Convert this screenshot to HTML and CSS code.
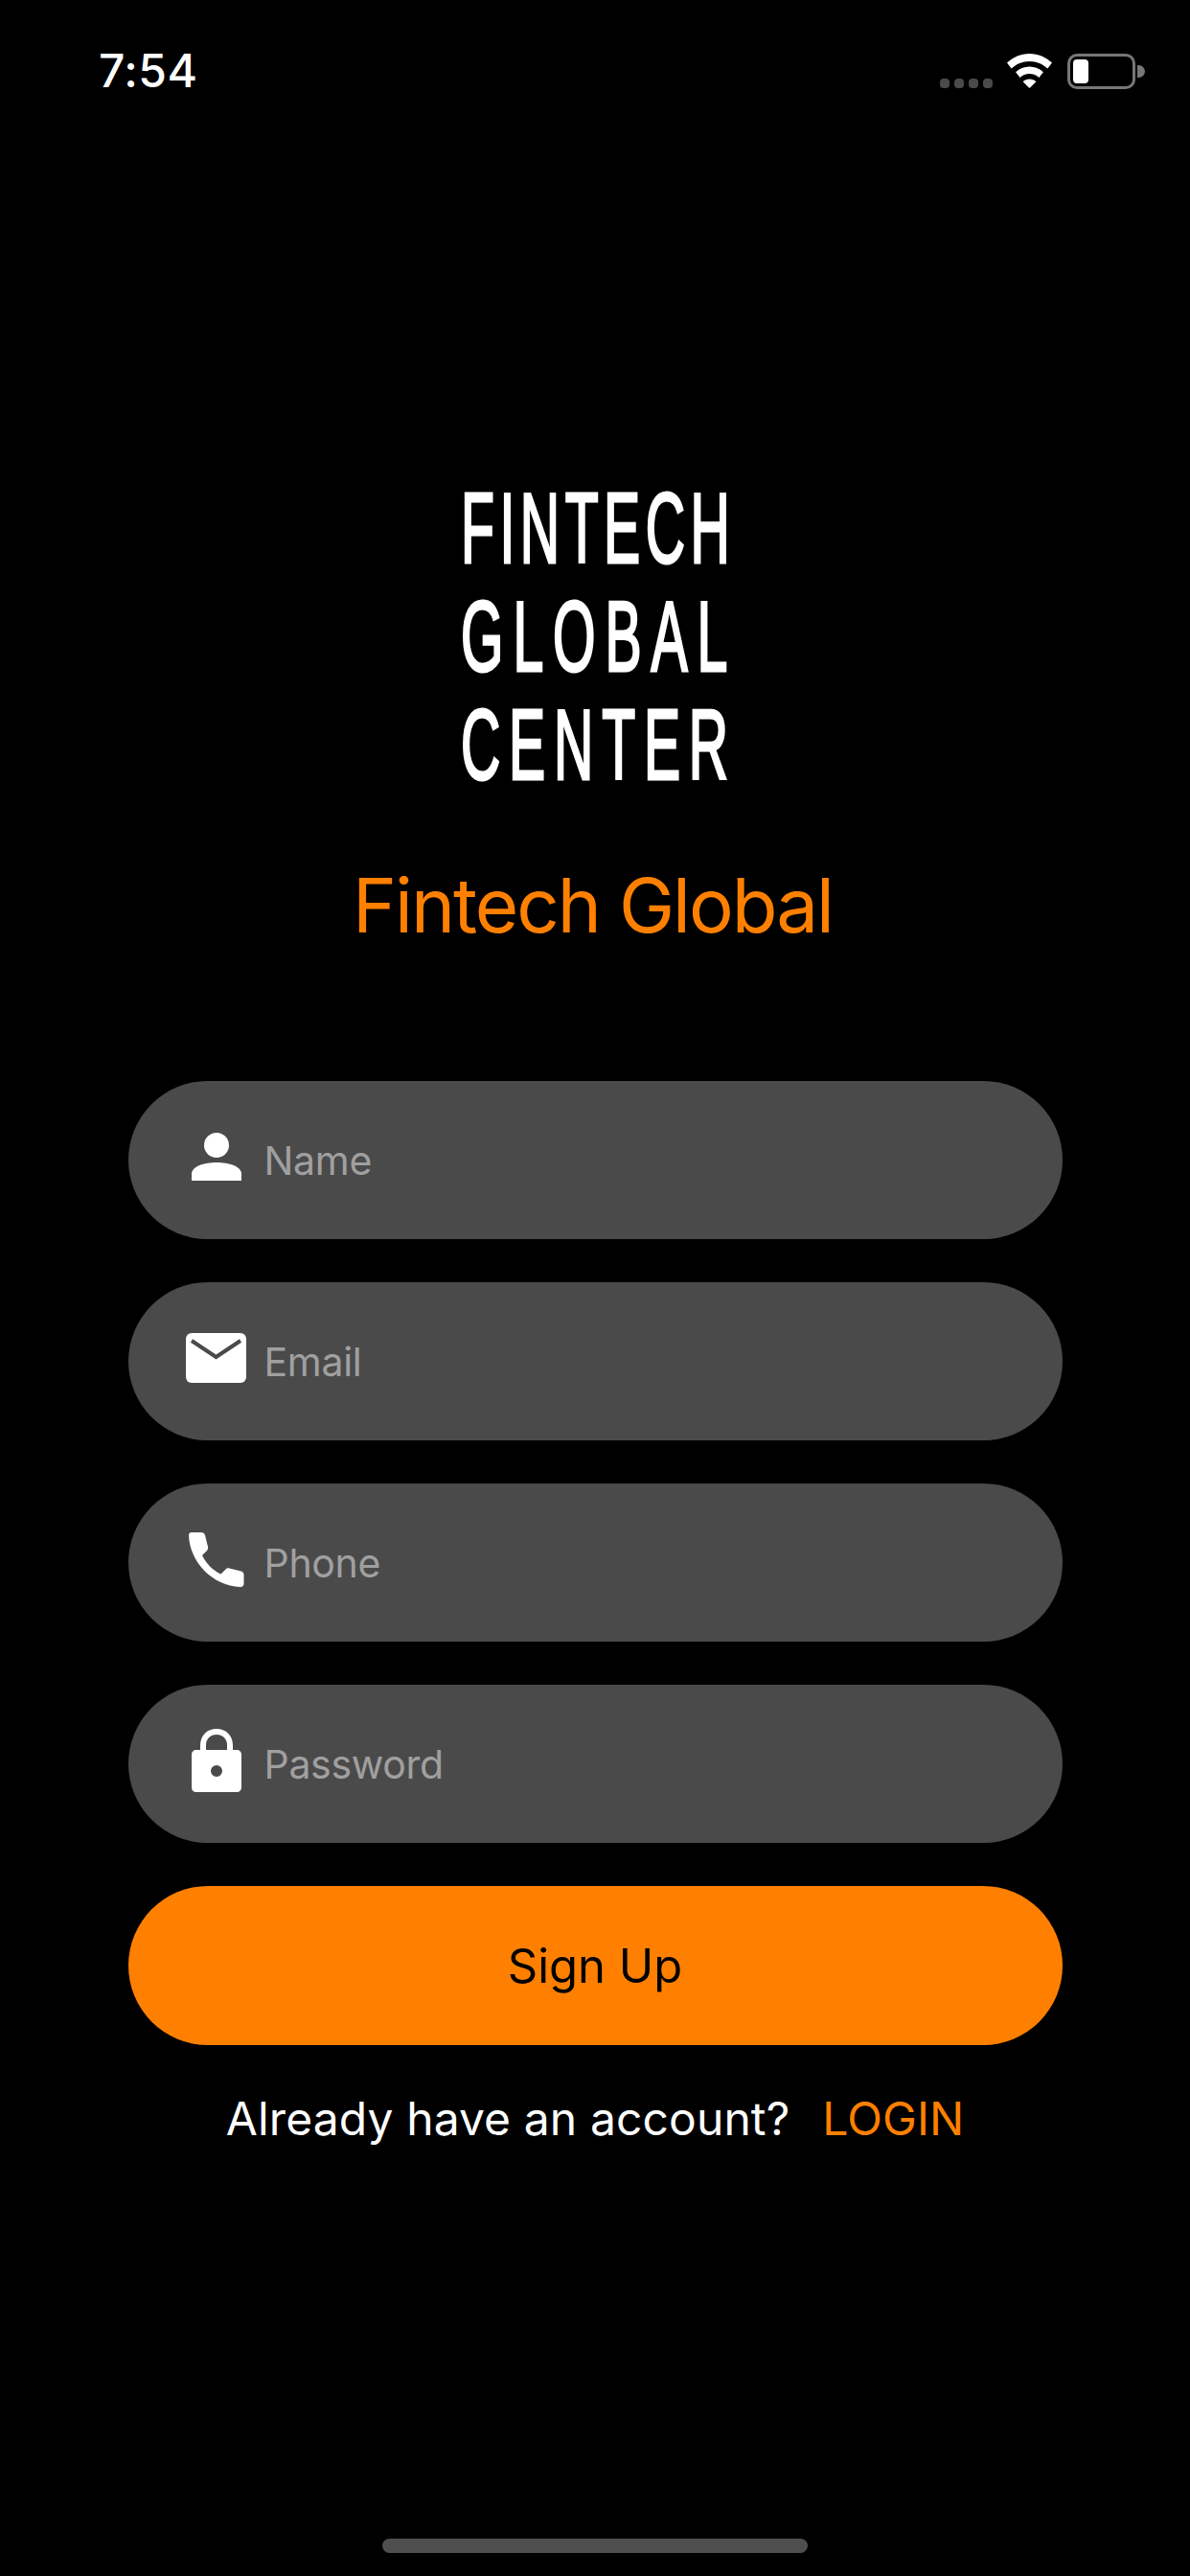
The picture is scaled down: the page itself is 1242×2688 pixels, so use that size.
FILE: index.html
```html
<!DOCTYPE html>
<html lang="en">
  <head>
    <meta charset="UTF-8" />
    <meta name="viewport" content="width=device-width, initial-scale=1.0" />
    <title>Fintech Global Sign Up</title>
    <link rel="stylesheet" href="styles.css">
  </head>
  <body>
    <div class="screen">
      <!-- Status bar -->
      <div class="status-bar">
        <span class="time">7:54</span>
        <div class="status-icons">
          <div class="signal">
            <span class="dot"></span>
            <span class="dot"></span>
            <span class="dot"></span>
            <span class="dot"></span>
          </div>
          <svg class="wifi" viewBox="0 0 47 36" width="47" height="36">
            <path fill="#fff" d="M23.5 0C14.5 0 6.4 3.6 0 9.6l4.6 6C9.6 10.8 16.2 8 23.5 8s13.9 2.8 18.9 7.6l4.6-6C40.6 3.600 32.500 0 23.500 0z" />
            <path fill="#fff" d="M23.500 13.500c-5.500 0-10.500 2.100-14.400 5.700l4.500 5.800c2.600-2.500 6-4 9.900-4s7.300 1.500 9.900 4l4.500-5.800c-3.900-3.600-8.900-5.700-14.400-5.700z" />
            <path fill="#fff" d="M23.500 26.500c-2.700 0-5.100 1-6.900 2.700L23.500 36l6.900-6.800c-1.800-1.700-4.200-2.700-6.900-2.700z" />
          </svg>
          <div class="battery">
            <div class="battery-body"><span class="battery-level"></span></div>
            <span class="battery-cap"></span>
          </div>
        </div>
      </div>

      <div class="brand">
        <div class="logo">
          <div class="logo-line line-fintech">FINTECH</div>
          <div class="logo-line line-global">GLOBAL</div>
          <div class="logo-line line-center">CENTER</div>
        </div>
        <h1 class="app-name">Fintech Global</h1>
      </div>

      <!-- Sign up form -->
      <div class="form">
        <div class="field">
          <span class="field-icon">
            <svg viewBox="0 0 52 52" width="52" height="52">
              <circle cx="26" cy="14" r="13" fill="#fff" />
              <path fill="#fff" d="M0 51V44C0 36 13 32 26 32s26 4 26 12v7z" />
            </svg>
          </span>
          <span class="field-label">Name</span>
        </div>
        <div class="field">
          <span class="field-icon">
            <svg viewBox="0 0 63 52" width="63" height="52">
              <rect x="0" y="0" width="63" height="52" rx="6" fill="#fff" />
              <path d="M6 8l25.500 17L57 8" fill="none" stroke="#4a4a4a" stroke-width="4" />
            </svg>
          </span>
          <span class="field-label">Email</span>
        </div>
        <div class="field">
          <span class="field-icon">
            <svg viewBox="0 0 58 58" width="58" height="58">
              <path fill="#fff" d="M3 1h10c2 0 3.500 1 4 3l3 12c.4 1.700 0 3-1.200 4.200l-4.800 4.800c4.500 9 11 15.500 19.500 19.500l4.800-4.800c1.200-1.200 2.600-1.600 4.200-1.200l12 3c2 .5 3 2 3 4v9c0 2-1.500 3.500-3.500 3.500C25 57 1 32 0 4c0-1.800 1.200-3 3-3z" />
            </svg>
          </span>
          <span class="field-label">Phone</span>
        </div>
        <div class="field">
          <span class="field-icon">
            <svg viewBox="0 0 52 66" width="52" height="66">
              <path fill="none" stroke="#fff" stroke-width="6" d="M12 24V17C12 8.500 18 3 26 3s14 5.500 14 14v7" />
              <path fill="#fff" fill-rule="evenodd" d="M5 22h42c3 0 5 2 5 5v34c0 3-2 5-5 5H5c-3 0-5-2-5-5V27c0-3 2-5 5-5zM26 38a6 6 0 1 0 0 12 6 6 0 0 0 0-12z" />
            </svg>
          </span>
          <span class="field-label">Password</span>
        </div>
        <button class="submit-button">Sign Up</button>
      </div>

      <div class="login-row">
        <span class="login-text">Already have an account?</span>
        <a class="login-link">LOGIN</a>
      </div>

      <div class="home-indicator"></div>
    </div>
  </body>
</html>
```

FILE: styles.css
```css
* {
  box-sizing: border-box;
}
body {
  margin: 0;
  background: #000;
  font-family: Inter, "Noto Sans", sans-serif;
}
.screen {
  width: 1242px;
  height: 2688px;
  background: #000;
  display: flex;
  flex-direction: column;
  align-items: center;
}

/* status bar */
.status-bar {
  width: 100%;
  height: 140px;
  padding: 56px 47px 0 103px;
  display: flex;
  justify-content: space-between;
  align-items: flex-start;
  color: #fff;
}
.time {
  font-size: 48px;
  font-weight: 500;
  line-height: 36px;
  letter-spacing: 0.5px;
}
.status-icons {
  display: flex;
  align-items: flex-start;
}
.signal {
  display: flex;
  gap: 5px;
  margin: 26px 15px 0 0;
}
.dot {
  width: 10px;
  height: 10px;
  border-radius: 4px;
  background: #4a4a4a;
}
.wifi {
  margin-right: 16px;
}
.battery {
  display: flex;
  align-items: center;
}
.battery-body {
  width: 71px;
  height: 37px;
  border: 3px solid #777;
  border-radius: 10px;
  padding: 3px;
}
.battery-level {
  display: block;
  width: 16px;
  height: 25px;
  background: #fff;
  border-radius: 4px;
}
.battery-cap {
  width: 8px;
  height: 13px;
  margin-left: 2px;
  background: #777;
  border-radius: 0 7px 7px 0;
}

/* logo and title */
.brand {
  margin-top: 355px;
  text-align: center;
}
.logo {
  width: 280px;
  margin: 0 auto;
  color: #fff;
  text-align: left;
  font-family: "Liberation Sans", sans-serif;
  font-size: 104px;
  font-weight: 400;
  line-height: 113px;
  -webkit-text-stroke: 3px #fff;
}
.logo-line {
  white-space: nowrap;
  transform: scaleX(0.55);
  transform-origin: left center;
}
.line-fintech {
  letter-spacing: 10px;
}
.line-global {
  letter-spacing: 18px;
}
.line-center {
  letter-spacing: 16px;
}
.app-name {
  margin: 64px 5px 0 0;
  color: #ff8000;
  font-size: 78px;
  font-weight: 400;
  line-height: 94px;
  letter-spacing: -2px;
}

/* form */
.form {
  width: 975px;
  margin-top: 136px;
  display: flex;
  flex-direction: column;
  gap: 45px;
}
.field {
  height: 165px;
  border-radius: 83px;
  background: #4a4a4a;
  padding-left: 57px;
  display: flex;
  align-items: center;
}
.field-icon {
  width: 70px;
  margin-bottom: 8px;
  display: flex;
  justify-content: center;
}
.field-label {
  margin-left: 15px;
  font-size: 41px;
  letter-spacing: -0.3px;
  color: #a0a0a0;
}
.submit-button {
  height: 166px;
  border: none;
  border-radius: 83px;
  background: #ff8000;
  color: #000;
  font-family: inherit;
  font-size: 49px;
}

/* login row */
.login-row {
  margin-top: 48px;
  display: flex;
  gap: 34px;
  font-size: 48px;
  line-height: 58px;
  letter-spacing: 0.1px;
}
.login-text {
  color: #fff;
}
.login-link {
  color: #ff8000;
}

.home-indicator {
  width: 444px;
  height: 15px;
  margin-top: auto;
  margin-bottom: 24px;
  border-radius: 8px;
  background: #4f4f4f;
}
```
